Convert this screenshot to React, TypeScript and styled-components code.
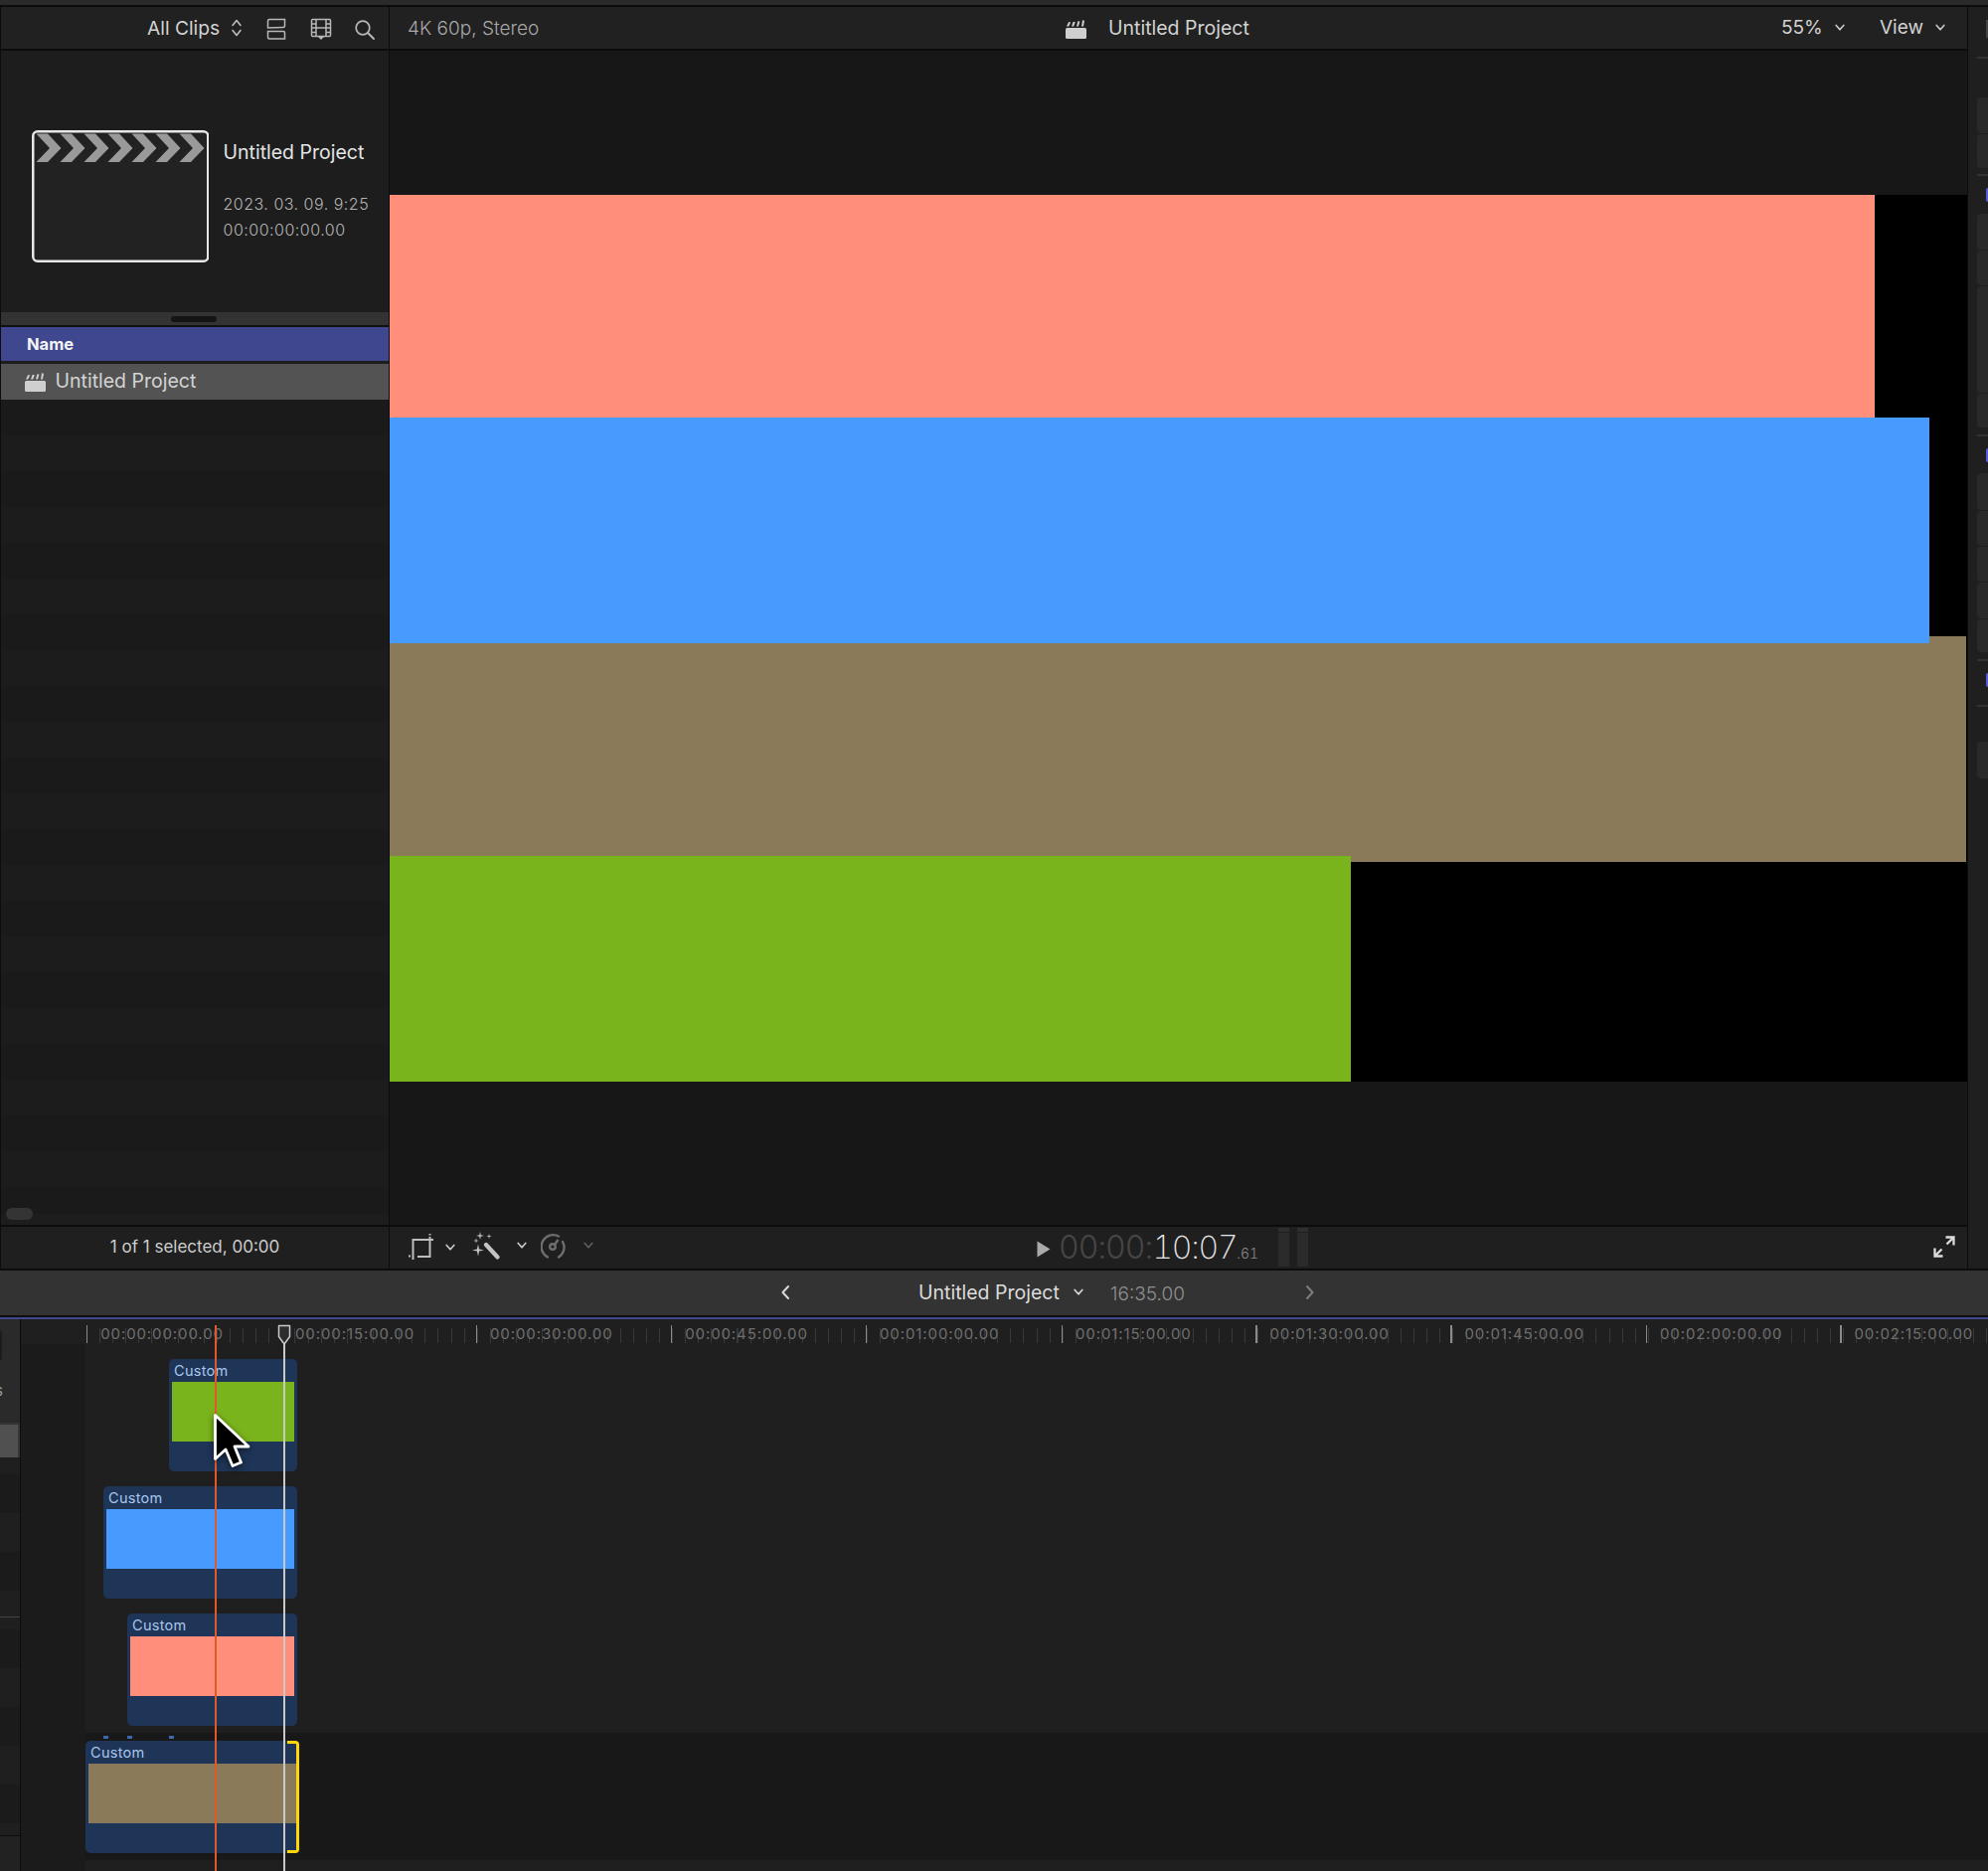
import React from "react";
import styled, { createGlobalStyle } from "styled-components";

const GlobalStyle = createGlobalStyle`
  html, body {
    margin: 0;
    padding: 0;
    background: #1f1f1f;
  }
  * {
    box-sizing: border-box;
  }
`;

const Page = styled.div`
  position: relative;
  width: 2000px;
  height: 1882px;
  overflow: hidden;
  background: #1f1f1f;
  font-family: Inter, "Liberation Sans", sans-serif;
`;

const TopStrip = styled.div`
  height: 7px;
  background: #2a2a2a;
  border-bottom: 2px solid #0c0c0c;
`;

const Upper = styled.div`
  display: flex;
  height: 1271px;
  border-bottom: 2px solid #0c0c0c;
`;

/* left browser panel */
const LeftPanel = styled.div`
  position: relative;
  width: 392px;
  flex: none;
  border-left: 1.5px solid #0c0c0c;
  border-right: 1.5px solid #0c0c0c;
  background: #1d1d1d;
`;

const BrowserBar = styled.div`
  position: relative;
  height: 44px;
  background: #212121;
  border-bottom: 2px solid #0c0c0c;
`;

const AllClips = styled.span`
  position: absolute;
  left: 147px;
  top: 10px;
  font-size: 19.2px;
  line-height: 22px;
  color: #d2d2d2;
`;

const BarIcon = styled.svg<{ $x: number; $y: number }>`
  position: absolute;
  left: ${p => p.$x}px;
  top: ${p => p.$y}px;
`;

const Clapper = styled.svg`
  position: absolute;
  left: 30.5px;
  top: 124px;
`;

const ThumbTitle = styled.div`
  position: absolute;
  left: 223.5px;
  top: 134px;
  font-size: 19.5px;
  line-height: 24px;
  color: #e4e4e4;
`;

const ThumbMeta = styled.div<{ $top: number }>`
  position: absolute;
  left: 223.5px;
  top: ${p => p.$top}px;
  font-size: 16px;
  line-height: 20px;
  font-weight: 300;
  letter-spacing: 0.5px;
  color: #b4b4b4;
`;

const SplitBar = styled.div`
  position: absolute;
  left: 0;
  right: 0;
  top: 307px;
  height: 15px;
  background: #333;
  border-bottom: 2px solid #111;
`;

const SplitHandle = styled.div`
  position: absolute;
  left: 171px;
  top: 4px;
  width: 46px;
  height: 6px;
  border-radius: 3px;
  background: #141414;
`;

const NameHeader = styled.div`
  position: absolute;
  left: 0;
  right: 0;
  top: 322px;
  height: 34px;
  padding-left: 26px;
  background: #3f478f;
  font-size: 16.5px;
  line-height: 35px;
  font-weight: 700;
  color: #f4f4f4;
`;

const ProjectRow = styled.div`
  position: absolute;
  left: 0;
  right: 0;
  top: 359px;
  height: 36px;
  padding-left: 54.5px;
  background: #535353;
  font-size: 19.5px;
  line-height: 34px;
  color: #d4d4d4;
`;

const RowIcon = styled.svg`
  position: absolute;
  left: 24px;
  top: 8px;
`;

const ListStripes = styled.div`
  position: absolute;
  left: 0;
  right: 0;
  top: 395px;
  height: 819px;
  background: repeating-linear-gradient(#1a1a1a 0 36px, #1c1c1c 36px 72px);
`;

const ListScroll = styled.div`
  position: absolute;
  left: 4.5px;
  top: 1208px;
  width: 27px;
  height: 12px;
  border-radius: 6px;
  background: #343434;
`;

const SelectedBar = styled.div`
  position: absolute;
  left: 0;
  right: 0;
  bottom: 0;
  height: 44px;
  border-top: 2px solid #0c0c0c;
  background: #1f1f1f;
  text-align: center;
  font-size: 17px;
  line-height: 41px;
  color: #cdcdcd;
`;

/* viewer */
const Viewer = styled.div`
  position: relative;
  width: 1587px;
  flex: none;
  background: #171717;
`;

const ViewerBar = styled.div`
  position: relative;
  height: 44px;
  background: #212121;
  border-bottom: 2px solid #0c0c0c;
`;

const ViewerFormat = styled.span`
  position: absolute;
  left: 18px;
  top: 11px;
  font-size: 19px;
  line-height: 22px;
  font-weight: 300;
  color: #a8a8a8;
`;

const ViewerTitle = styled.span`
  position: absolute;
  left: 723px;
  top: 10px;
  font-size: 19.5px;
  line-height: 22px;
  color: #d2d2d2;
`;

const ViewerMenu = styled.span<{ $x: number }>`
  position: absolute;
  left: ${p => p.$x}px;
  top: 10px;
  font-size: 19px;
  line-height: 22px;
  color: #d2d2d2;
`;

const Canvas = styled.div`
  position: absolute;
  left: 0;
  right: 0;
  top: 189px;
  height: 892px;
  background: #000;
`;

const Layer = styled.div<{ $top: number; $width: number; $height: number; $color: string; $z: number }>`
  position: absolute;
  left: 0;
  top: ${p => p.$top}px;
  width: ${p => p.$width}px;
  height: ${p => p.$height}px;
  background: ${p => p.$color};
  z-index: ${p => p.$z};
`;

const ViewerFooter = styled.div`
  position: absolute;
  left: 0;
  right: 0;
  bottom: 0;
  height: 44px;
  border-top: 2px solid #0c0c0c;
  background: #1f1f1f;
`;

const Timecode = styled.div`
  position: absolute;
  left: 673px;
  top: 0.5px;
  display: flex;
  align-items: baseline;
  font-size: 32px;
  line-height: 40px;
  font-weight: 200;
  letter-spacing: -1.3px;
  font-variant-numeric: tabular-nums;
  color: #e6e6e6;
`;

const TimecodeDim = styled.span`
  width: 94.5px;
  font-weight: 300;
  letter-spacing: -1px;
  color: #464646;
`;

const TimecodeFrames = styled.span`
  font-size: 14px;
  font-weight: 300;
  letter-spacing: 0;
  color: #8a8a8a;
  margin-left: 0;
`;

const Meter = styled.div<{ $x: number }>`
  position: absolute;
  left: ${p => p.$x}px;
  top: 1px;
  width: 11px;
  height: 39px;
  background: linear-gradient(#2f2f2f 0 4px, #1f1f1f 4px 5px, #2b2b2b 5px);
`;

const RightPanel = styled.div`
  position: relative;
  flex: 1;
  background: #1f1f1f;
  border-left: 1.5px solid #0c0c0c;
`;

const InspectorStub = styled.div<{ $top: number; $height: number }>`
  position: absolute;
  left: 9px;
  right: 0;
  top: ${p => p.$top}px;
  height: ${p => p.$height}px;
  background: #292929;
  border-radius: 4px 0 0 4px;
`;

const InspectorRule = styled.div<{ $top: number }>`
  position: absolute;
  left: 9px;
  right: 0;
  top: ${p => p.$top}px;
  height: 2px;
  background: #323232;
`;

const InspectorDot = styled.div<{ $top: number }>`
  position: absolute;
  left: 18px;
  right: 0;
  top: ${p => p.$top}px;
  height: 14px;
  border-radius: 3px 0 0 3px;
  background: #5a5ae0;
`;

/* timeline title */
const TimelineBar = styled.div`
  position: relative;
  height: 47px;
  background: #333;
  border-bottom: 2px solid #0f0f0f;
`;

const TimelineTitle = styled.span`
  position: absolute;
  left: 924px;
  top: 11px;
  font-size: 19.5px;
  line-height: 22px;
  color: #dcdcdc;
`;

const TimelineLength = styled.span`
  position: absolute;
  left: 1117px;
  top: 13px;
  font-size: 19px;
  line-height: 22px;
  font-weight: 300;
  color: #8f8f8f;
`;

/* timeline */
const Timeline = styled.div`
  position: relative;
  height: 557px;
  background: #1f1f1f;
  border-top: 2px solid #3f478f;
`;

const SideRail = styled.div`
  position: absolute;
  left: 0;
  top: 0;
  bottom: 0;
  width: 21px;
  overflow: hidden;
  background: repeating-linear-gradient(#1b1b1b 0 39px, #1f1f1f 39px 78px);
  border-right: 1.5px solid #0c0c0c;
`;

const RailRole = styled.div`
  position: absolute;
  left: 0;
  top: 0;
  width: 19.5px;
  height: 106px;
  background: #2a2a2a;
  border-bottom: 2px solid #333;
`;

const RailBox = styled.div`
  position: absolute;
  left: -6px;
  top: 11px;
  width: 8px;
  height: 31px;
  border-radius: 4px;
  background: #1c1c1c;
`;

const RailLetter = styled.span`
  position: absolute;
  left: -5px;
  top: 63px;
  font-size: 15px;
  line-height: 18px;
  color: #9a9a9a;
`;

const RailActive = styled.div`
  position: absolute;
  left: 0;
  top: 106px;
  width: 19.5px;
  height: 33px;
  background: linear-gradient(#505050, #505050) 0 0 / 18px 100% no-repeat, #383838;
`;

const RailRule = styled.div<{ $top: number; $color: string }>`
  position: absolute;
  left: 0;
  width: 19.5px;
  top: ${p => p.$top}px;
  height: 1px;
  background: ${p => p.$color};
`;

const RailFoot = styled.div`
  position: absolute;
  left: 0;
  top: 520px;
  bottom: 0;
  width: 19.5px;
  background: #222;
`;

const IndexGutter = styled.div`
  position: absolute;
  left: 21px;
  top: 25px;
  bottom: 0;
  width: 65px;
  background: #1b1b1b;
`;

const Ruler = styled.div`
  position: absolute;
  left: 86.7px;
  right: 0;
  top: 9px;
  height: 15px;
  background: repeating-linear-gradient(to right, #383838 0 1px, transparent 1px 13.09px);
`;

const MajorTick = styled.div<{ $x: number }>`
  position: absolute;
  left: ${p => p.$x}px;
  top: 6px;
  width: 1.5px;
  height: 18px;
  background: #8a8a8a;
`;

const RulerLabel = styled.span<{ $x: number }>`
  position: absolute;
  left: ${p => p.$x}px;
  top: 6px;
  font-size: 15px;
  line-height: 18px;
  letter-spacing: 0.9px;
  color: #6e6e6e;
`;

const Storyline = styled.div`
  position: absolute;
  left: 86px;
  right: 0;
  top: 416px;
  height: 128px;
  background: #181818;
`;

const Clip = styled.div<{ $x: number; $y: number; $width: number }>`
  position: absolute;
  left: ${p => p.$x}px;
  top: ${p => p.$y}px;
  width: ${p => p.$width}px;
  height: 112.5px;
  border-radius: 5px;
  background: #1e3557;
  font-size: 14.5px;
  line-height: 18px;
  letter-spacing: 0.3px;
  color: #a9c6ee;
`;

const ClipLabel = styled.span`
  position: absolute;
  left: 5px;
  top: 2.5px;
`;

const ClipThumb = styled.div<{ $color: string; $rightGap: number }>`
  position: absolute;
  left: 3px;
  right: ${p => p.$rightGap}px;
  top: 23px;
  height: 60px;
  background: ${p => p.$color};
`;

const SelectBracket = styled.div`
  position: absolute;
  left: 289.3px;
  top: 424px;
  width: 12px;
  height: 113px;
  border: 3px solid #ffd60a;
  border-left: 0;
  border-radius: 0 4px 4px 0;
  z-index: 2;
`;

const ConnectDot = styled.div<{ $x: number }>`
  position: absolute;
  left: ${p => p.$x}px;
  top: 419px;
  width: 4.5px;
  height: 3px;
  background: #3a68a8;
`;

const SkimLine = styled.div`
  position: absolute;
  left: 216px;
  top: 6px;
  bottom: 0;
  width: 1.5px;
  background: #e0592a;
  z-index: 3;
`;

const PlayLine = styled.div`
  position: absolute;
  left: 285px;
  top: 17px;
  bottom: 0;
  width: 2px;
  background: #c9c9c9;
  z-index: 3;
`;

const PlayHead = styled.svg`
  position: absolute;
  left: 279px;
  top: 5px;
  z-index: 4;
`;

const Cursor = styled.svg`
  position: absolute;
  left: 212px;
  top: 95px;
  z-index: 5;
  filter: drop-shadow(0 2px 3px rgba(0, 0, 0, 0.55));
`;

const SmallChevron: React.FC<{ x: number; y: number; color?: string }> = ({ x, y, color = "#c8c8c8" }) => (
  <BarIcon $x={x} $y={y} width="10" height="8" viewBox="0 0 10 8" fill="none">
    <path d="M1.2 1.5 5 5.8l3.8-4.3" stroke={color} strokeWidth="1.7" strokeLinecap="round" strokeLinejoin="round" />
  </BarIcon>
);

const ClapperSmall = () => (
  <>
    <rect x="0" y="9" width="21" height="11" rx="1.5" fill="#cfcfcf" />
    <path
      d="M1 7.5 3 3.2h2.2l-2 4.3zM6 7.5l1.6-4.5h2.2L8.2 7.5zM11 7.5l1.4-5.3 2 .2-1.4 5.1zM16 7.5l1-6.3 2 .5-1 5.8z"
      fill="#cfcfcf"
    />
  </>
);

// four point sparkle around cx,cy
const sparkle = (cx: number, cy: number, r: number) => {
  const k = r * 0.18;
  return `M${cx} ${cy - r}L${cx + k} ${cy - k}L${cx + r} ${cy}L${cx + k} ${cy + k}L${cx} ${cy + r}L${cx - k} ${cy + k}L${cx - r} ${cy}L${cx - k} ${cy - k}Z`;
};

const rulerMarks = [
  { x: 86.7, label: "00:00:00:00.00" },
  { x: 282.5, label: "00:00:15:00.00", hideTick: true },
  { x: 478.5, label: "00:00:30:00.00" },
  { x: 674.7, label: "00:00:45:00.00" },
  { x: 870.5, label: "00:01:00:00.00" },
  { x: 1067.5, label: "00:01:15:00.00" },
  { x: 1263, label: "00:01:30:00.00" },
  { x: 1459, label: "00:01:45:00.00" },
  { x: 1655.5, label: "00:02:00:00.00" },
  { x: 1851, label: "00:02:15:00.00" }
];

const clips = [
  { x: 170, y: 40, width: 129.3, color: "#7ab41c", rightGap: 3 },
  { x: 104, y: 168, width: 195.3, color: "#479bff", rightGap: 3 },
  { x: 128, y: 296, width: 171.3, color: "#ff8e7a", rightGap: 3 },
  { x: 86, y: 424, width: 213.3, color: "#8a7a5a", rightGap: 1 }
];

export default function App() {
  return (
    <Page>
      <GlobalStyle />
      <TopStrip />
      <Upper>
        <LeftPanel>
          <BrowserBar>
            <AllClips>All Clips</AllClips>
            <BarIcon $x={231} $y={11} width="12" height="20" viewBox="0 0 12 20" fill="none">
              <path d="M2 7.5 6 2.5l4 5M2 12.5l4 5 4-5" stroke="#bdbdbd" strokeWidth="1.6" strokeLinecap="round" strokeLinejoin="round" />
            </BarIcon>
            <BarIcon $x={266} $y={11} width="22" height="23" viewBox="0 0 22 23" fill="none" stroke="#b8b8b8" strokeWidth="1.5">
              <path d="M2.5 10V3a1.5 1.5 0 0 1 1.5-1.5h15.5V8a1.5 1.5 0 0 1-1.5 1.5z" />
              <path d="M2.5 13.5H18a1.5 1.5 0 0 1 1.5 1.5v6H4A1.5 1.5 0 0 1 2.5 19.5z" />
            </BarIcon>
            <BarIcon $x={311} $y={11} width="22" height="23" viewBox="0 0 22 23" fill="none" stroke="#b8b8b8" strokeWidth="1.5">
              <rect x="1.5" y="1.5" width="19" height="17" rx="1" />
              <path d="M6 1.5v17M16 1.5v17M1.5 6H6M1.5 10H6M1.5 14.5H6M16 6h4.5M16 10h4.5M16 14.5h4.5M6 10h10" />
              <path d="M8 19h6l-3 3z" fill="#b8b8b8" stroke="none" />
            </BarIcon>
            <BarIcon $x={355} $y={12} width="22" height="22" viewBox="0 0 22 22" fill="none" stroke="#b8b8b8" strokeWidth="1.7">
              <circle cx="9" cy="9" r="6.8" />
              <path d="m14 14 6 6" strokeLinecap="round" strokeWidth="2" />
            </BarIcon>
          </BrowserBar>
          <Clapper width="178.5" height="133" viewBox="0 0 178.5 133" fill="none">
            <rect x="1.25" y="1.25" width="176" height="130.5" rx="4.5" fill="#222" stroke="#e6e6e6" strokeWidth="2.5" />
            {[0, 1, 2, 3, 4, 5, 6].map(i => {
              const x0 = 4.5 + i * 24;
              return (
                <path
                  key={i}
                  d={`M${x0} 32 L${x0 + 13.5} 18 L${x0} 3.5 L${x0 + 11.5} 3.5 L${x0 + 25} 18 L${x0 + 11.5} 32 Z`}
                  fill="#9a9a9a"
                />
              );
            })}
          </Clapper>
          <ThumbTitle>Untitled Project</ThumbTitle>
          <ThumbMeta $top={188}>2023. 03. 09. 9:25</ThumbMeta>
          <ThumbMeta $top={214}>00:00:00:00.00</ThumbMeta>
          <SplitBar>
            <SplitHandle />
          </SplitBar>
          <NameHeader>Name</NameHeader>
          <ProjectRow>
            <RowIcon width="21" height="20" viewBox="0 0 21 20">
              <ClapperSmall />
            </RowIcon>
            Untitled Project
          </ProjectRow>
          <ListStripes />
          <ListScroll />
          <SelectedBar>1 of 1 selected, 00:00</SelectedBar>
        </LeftPanel>
        <Viewer>
          <ViewerBar>
            <ViewerFormat>4K 60p, Stereo</ViewerFormat>
            <BarIcon $x={680} $y={12} width="21" height="20" viewBox="0 0 21 20">
              <ClapperSmall />
            </BarIcon>
            <ViewerTitle>Untitled Project</ViewerTitle>
            <ViewerMenu $x={1400}>55%</ViewerMenu>
            <SmallChevron x={1454} y={17} />
            <ViewerMenu $x={1499}>View</ViewerMenu>
            <SmallChevron x={1555} y={17} />
          </ViewerBar>
          <Canvas>
            <Layer $top={0} $width={1494} $height={223.5} $color="#ff8e7a" $z={1} />
            <Layer $top={223.5} $width={1549} $height={227} $color="#479bff" $z={2} />
            <Layer $top={444} $width={1586} $height={227} $color="#8a7a5a" $z={1} />
            <Layer $top={665} $width={966.5} $height={227} $color="#7ab41c" $z={3} />
          </Canvas>
          <ViewerFooter>
            <BarIcon $x={19} $y={7} width="27" height="27" viewBox="0 0 27 27" fill="none" stroke="#bdbdbd" strokeWidth="2">
              <path d="M4.5 26V6H25" />
              <path d="M21.5 3v20H9" />
              <path d="M21.5 0v1.5M0 22.5h2" />
            </BarIcon>
            <SmallChevron x={56} y={17} />
            <BarIcon $x={83} $y={5} width="28" height="28" viewBox="0 0 28 28" fill="none">
              <path d="M14 13 25.5 25.5" stroke="#c4c4c4" strokeWidth="4.2" strokeLinecap="round" />
              <path d={sparkle(6, 18.5, 6)} fill="#c4c4c4" />
              <path d={sparkle(8, 4, 4)} fill="#c4c4c4" />
              <path d={sparkle(17, 4.5, 2.8)} fill="#c4c4c4" />
              <path d={sparkle(4, 9, 2.8)} fill="#c4c4c4" />
            </BarIcon>
            <SmallChevron x={128} y={15} />
            <BarIcon $x={152} $y={6} width="25" height="27" viewBox="0 0 25 27" fill="none" stroke="#6e6e6e" strokeWidth="2.4">
              <path d="M7 24.5A11.5 11.5 0 0 1 18 3.5" strokeLinecap="round" />
              <path d="M22 9A11.5 11.5 0 0 1 18 24.5" strokeLinecap="round" />
              <circle cx="12" cy="14" r="2.8" />
              <path d="m14 12 3.5-5" />
            </BarIcon>
            <SmallChevron x={195} y={15} color="#5e5e5e" />
            <BarIcon $x={651} $y={14} width="14" height="17" viewBox="0 0 14 17">
              <path d="M0.5 .5 13.5 8.5 .5 16.5z" fill="#aaa" />
            </BarIcon>
            <Timecode>
              <TimecodeDim>00:00:</TimecodeDim>
              10:07
              <TimecodeFrames>.61</TimecodeFrames>
            </Timecode>
            <Meter $x={894} />
            <Meter $x={913} />
            <BarIcon $x={1553} $y={9} width="22" height="22" viewBox="0 0 22 22" fill="none" stroke="#dcdcdc" strokeWidth="2.3">
              <path d="M20.5 9.5V1.5H12.5M20.5 1.5 13.5 8.5" />
              <path d="M1.5 12.5v8h8M1.5 20.5l7-7" />
            </BarIcon>
          </ViewerFooter>
        </Viewer>
        <RightPanel>
          <BarIcon $x={18} $y={13} width="3" height="18" viewBox="0 0 3 18">
            <rect width="3" height="18" fill="#444" />
          </BarIcon>
          <InspectorRule $top={50} />
          <InspectorStub $top={91} $height={36} />
          <InspectorStub $top={128} $height={34} />
          <InspectorRule $top={168} />
          <InspectorDot $top={182} />
          <InspectorStub $top={208} $height={36} />
          <InspectorStub $top={245} $height={35} />
          <InspectorStub $top={281} $height={107} />
          <InspectorStub $top={389} $height={34} />
          <InspectorRule $top={430} />
          <InspectorDot $top={444} />
          <InspectorStub $top={469} $height={37} />
          <InspectorStub $top={507} $height={35} />
          <InspectorStub $top={543} $height={35} />
          <InspectorStub $top={579} $height={36} />
          <InspectorStub $top={616} $height={33} />
          <InspectorRule $top={656} />
          <InspectorDot $top={670} />
          <InspectorRule $top={702} />
          <InspectorStub $top={739} $height={37} />
        </RightPanel>
      </Upper>
      <TimelineBar>
        <BarIcon $x={785} $y={14} width="10" height="16" viewBox="0 0 10 16" fill="none">
          <path d="M8 2 2.5 8 8 14" stroke="#d8d8d8" strokeWidth="2" strokeLinecap="round" strokeLinejoin="round" />
        </BarIcon>
        <TimelineTitle>Untitled Project</TimelineTitle>
        <SmallChevron x={1080} y={18} color="#d8d8d8" />
        <TimelineLength>16:35.00</TimelineLength>
        <BarIcon $x={1313} $y={14} width="10" height="16" viewBox="0 0 10 16" fill="none">
          <path d="M2 2l5.5 6L2 14" stroke="#7d7d7d" strokeWidth="2" strokeLinecap="round" strokeLinejoin="round" />
        </BarIcon>
      </TimelineBar>
      <Timeline>
        <SideRail>
          <RailRole />
          <RailBox />
          <RailLetter>s</RailLetter>
          <RailActive />
          <RailRule $top={299} $color="#444" />
          <RailFoot />
          <RailRule $top={519} $color="#0c0c0c" />
        </SideRail>
        <IndexGutter />
        <Ruler />
        {rulerMarks.map(({ x, label, hideTick }) => (
          <React.Fragment key={label}>
            {!hideTick && <MajorTick $x={x} />}
            <RulerLabel $x={x + 14.5}>{label}</RulerLabel>
          </React.Fragment>
        ))}
        <Storyline />
        {clips.map(({ x, y, width, color, rightGap }) => (
          <Clip key={color} $x={x} $y={y} $width={width}>
            <ClipLabel>Custom</ClipLabel>
            <ClipThumb $color={color} $rightGap={rightGap} />
          </Clip>
        ))}
        <ConnectDot $x={104} />
        <ConnectDot $x={128} />
        <ConnectDot $x={170} />
        <SelectBracket />
        <SkimLine />
        <PlayLine />
        <PlayHead width="14" height="22" viewBox="0 0 14 22" fill="none">
          <path d="M1.5 1.5h11v11L7 20 1.5 12.5z" fill="#2c2c2c" stroke="#c9c9c9" strokeWidth="1.5" strokeLinejoin="round" />
        </PlayHead>
        <Cursor width="42" height="60" viewBox="0 0 42 60">
          <path
            d="M4.5 1.5V45.5L15 36 22 52.5 30.5 49 24 33H38Z"
            fill="#000"
            stroke="#fff"
            strokeWidth="2.8"
            strokeLinejoin="round"
          />
        </Cursor>
      </Timeline>
    </Page>
  );
}
